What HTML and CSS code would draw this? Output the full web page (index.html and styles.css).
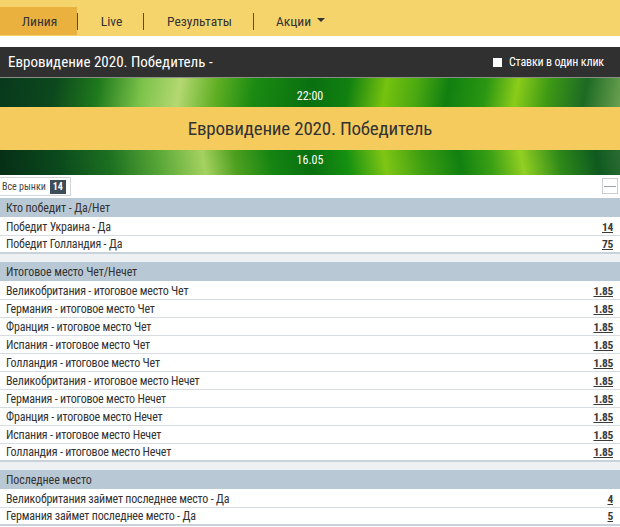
FILE: index.html
```html
<!DOCTYPE html>
<html lang="ru">
<head>
<meta charset="utf-8">
<title>Евровидение 2020</title>
<link rel="stylesheet" href="styles.css">
</head>
<body>
<nav class="topnav">
  <a class="tab active">Линия</a>
  <span class="sep"></span>
  <a class="tab tab-live">Live</a>
  <span class="sep"></span>
  <a class="tab tab-res">Результаты</a>
  <span class="sep"></span>
  <a class="tab tab-promo">Акции <span class="caret"></span></a>
</nav>

<header class="titlebar">
  <h1 class="title">Евровидение 2020. Победитель -</h1>
  <label class="oneclick"><span class="check"></span>Ставки в один клик</label>
</header>

<section class="banner">
  <div class="strip strip-top">22:00</div>
  <div class="band">Евровидение 2020. Победитель</div>
  <div class="strip strip-bottom">16.05</div>
</section>

<div class="filterbar">
  <div class="allmarkets">Все рынки <span class="badge">14</span></div>
  <div class="collapse"><span></span></div>
</div>

<div class="markets">
  <div class="group">
    <div class="ghead">Кто победит - Да/Нет</div>
    <div class="row"><span>Победит Украина - Да</span><a class="odd">14</a></div>
    <div class="row"><span>Победит Голландия - Да</span><a class="odd">75</a></div>
  </div>
  <div class="group">
    <div class="ghead">Итоговое место Чет/Нечет</div>
    <div class="row"><span>Великобритания - итоговое место Чет</span><a class="odd">1.85</a></div>
    <div class="row"><span>Германия - итоговое место Чет</span><a class="odd">1.85</a></div>
    <div class="row"><span>Франция - итоговое место Чет</span><a class="odd">1.85</a></div>
    <div class="row"><span>Испания - итоговое место Чет</span><a class="odd">1.85</a></div>
    <div class="row"><span>Голландия - итоговое место Чет</span><a class="odd">1.85</a></div>
    <div class="row"><span>Великобритания - итоговое место Нечет</span><a class="odd">1.85</a></div>
    <div class="row"><span>Германия - итоговое место Нечет</span><a class="odd">1.85</a></div>
    <div class="row"><span>Франция - итоговое место Нечет</span><a class="odd">1.85</a></div>
    <div class="row"><span>Испания - итоговое место Нечет</span><a class="odd">1.85</a></div>
    <div class="row"><span>Голландия - итоговое место Нечет</span><a class="odd">1.85</a></div>
  </div>
  <div class="group">
    <div class="ghead">Последнее место</div>
    <div class="row"><span>Великобритания займет последнее место - Да</span><a class="odd">4</a></div>
    <div class="row"><span>Германия займет последнее место - Да</span><a class="odd">5</a></div>
  </div>
</div>
</body>
</html>
```

FILE: styles.css
```css
* { box-sizing: border-box; }
html, body { margin: 0; padding: 0; }
body {
  font-family: Roboto, "Liberation Sans", sans-serif;
  font-stretch: 85%;
  color: #333;
  background: #fff;
  width: 620px;
  overflow: hidden;
}

.topnav {
  height: 36px;
  background: #f6d46c;
  display: flex;
  align-items: flex-end;
  padding-bottom: 1px;
}
.tab {
  height: 28px;
  display: flex;
  align-items: center;
  font-size: 13.5px;
  color: #333;
  text-decoration: none;
}
.tab.active {
  width: 77px;
  justify-content: center;
  background: #ebb13f;
  padding-left: 2px;
}
.tab-live { width: 65px; justify-content: center; padding-left: 2px; }
.tab-res { width: 109px; justify-content: center; padding-left: 2px; }
.tab-promo { padding-left: 22px; }
.sep {
  width: 1px;
  height: 17px;
  background: #5a4a2a;
  align-self: center;
  margin-top: 8px;
}
.caret {
  display: inline-block;
  margin-left: 6px;
  width: 0; height: 0;
  border-left: 4px solid transparent;
  border-right: 4px solid transparent;
  border-top: 4px solid #333;
  position: relative;
  top: -1px;
}

.titlebar {
  margin-top: 11px;
  height: 31px;
  background: #303030;
  border-bottom: 1px solid #8a8f86;
  display: flex;
  align-items: center;
  justify-content: space-between;
  padding: 0 16px 0 8px;
}
.title {
  margin: 0;
  font-size: 15px;
  font-weight: 400;
  color: #fff;
}
.oneclick {
  font-size: 12px;
  color: #fff;
  display: flex;
  align-items: center;
  letter-spacing: -0.15px;
}
.check {
  width: 9px; height: 9px;
  background: #fff;
  margin-right: 7px;
}

.banner {
  height: 97px;
  display: flex;
  flex-direction: column;
}
.strip {
  flex: 1;
  display: flex;
  align-items: center;
  justify-content: center;
  font-size: 12px;
  color: #fff;
}
.strip-top {
  height: 29px; flex: none;
  padding-top: 6px;
  background: linear-gradient(100deg,
    #08391c 0%, #0c481d 9%, #1f7a1c 16%, #7cc34a 23%, #b4d872 29%, #5fae22 35%,
    #1a8a12 41%, #0a7010 50%, #108010 56%, #76c20e 62%, #4aa811 67%,
    #117f10 72%, #2a9612 78%, #8bcc1a 83%, #3e9a14 88%, #1d6a24 94%, #6aa050 100%);
}
.band {
  height: 43px;
  background: #f5cb5d;
  display: flex;
  align-items: center;
  justify-content: center;
  font-size: 19px;
  color: #333;
  letter-spacing: -0.2px;
}
.strip-bottom {
  padding-bottom: 6px;
  background: linear-gradient(80deg,
    #062e16 0%, #0b4a1c 10%, #1c7020 18%, #5aa838 26%, #a5d260 33%, #4fa020 38%,
    #148412 44%, #0a7010 50%, #159010 56%, #7fc614 62%, #3e9e12 68%,
    #108010 74%, #3aa014 79%, #92cf22 84%, #2e8a18 90%, #0f5a20 96%, #2a6a32 100%);
}

.filterbar {
  height: 23px;
  display: flex;
  align-items: flex-start;
  justify-content: space-between;
  padding: 2px 2px 0 0;
}
.allmarkets {
  height: 19px;
  width: 71px;
  border: 1px solid #d2d6da;
  border-left: none;
  display: flex;
  align-items: center;
  padding-left: 2px;
  font-size: 10px;
  color: #444;
  gap: 4px;
  white-space: nowrap;
}
.badge {
  background: #3c4d59;
  color: #fff;
  font-size: 10px;
  font-weight: 700;
  padding: 1px 3px;
  line-height: 12px;
}
.collapse {
  width: 16px; height: 16px;
  border: 1px solid #c9ced3;
  margin-top: 1px;
  display: flex;
  align-items: center;
  justify-content: center;
}
.collapse span {
  width: 12px; height: 1px;
  background: #9aa3ab;
}

.markets {
  display: flex;
  flex-direction: column;
  gap: 8px;
  background: #eef1f4;
}
.group { background: #fff; }
.ghead {
  height: 20px;
  background: #b9c8d5;
  display: flex;
  align-items: center;
  padding-left: 6px;
  font-size: 12px;
  letter-spacing: -0.1px;
  color: #333;
  border-bottom: 1px solid #fff;
}
.row {
  height: 18px;
  display: flex;
  align-items: center;
  justify-content: space-between;
  padding: 0 7px 0 6px;
  font-size: 12px;
  letter-spacing: -0.2px;
  color: #333;
  border-bottom: 1px solid #d6dce2;
}
.group .row:last-child { border-bottom: 2px solid #c9d1d9; }
.odd {
  font-weight: 700;
  text-decoration: underline;
  color: #3a3a3a;
  font-size: 11.5px;
  letter-spacing: -0.3px;
}
```
